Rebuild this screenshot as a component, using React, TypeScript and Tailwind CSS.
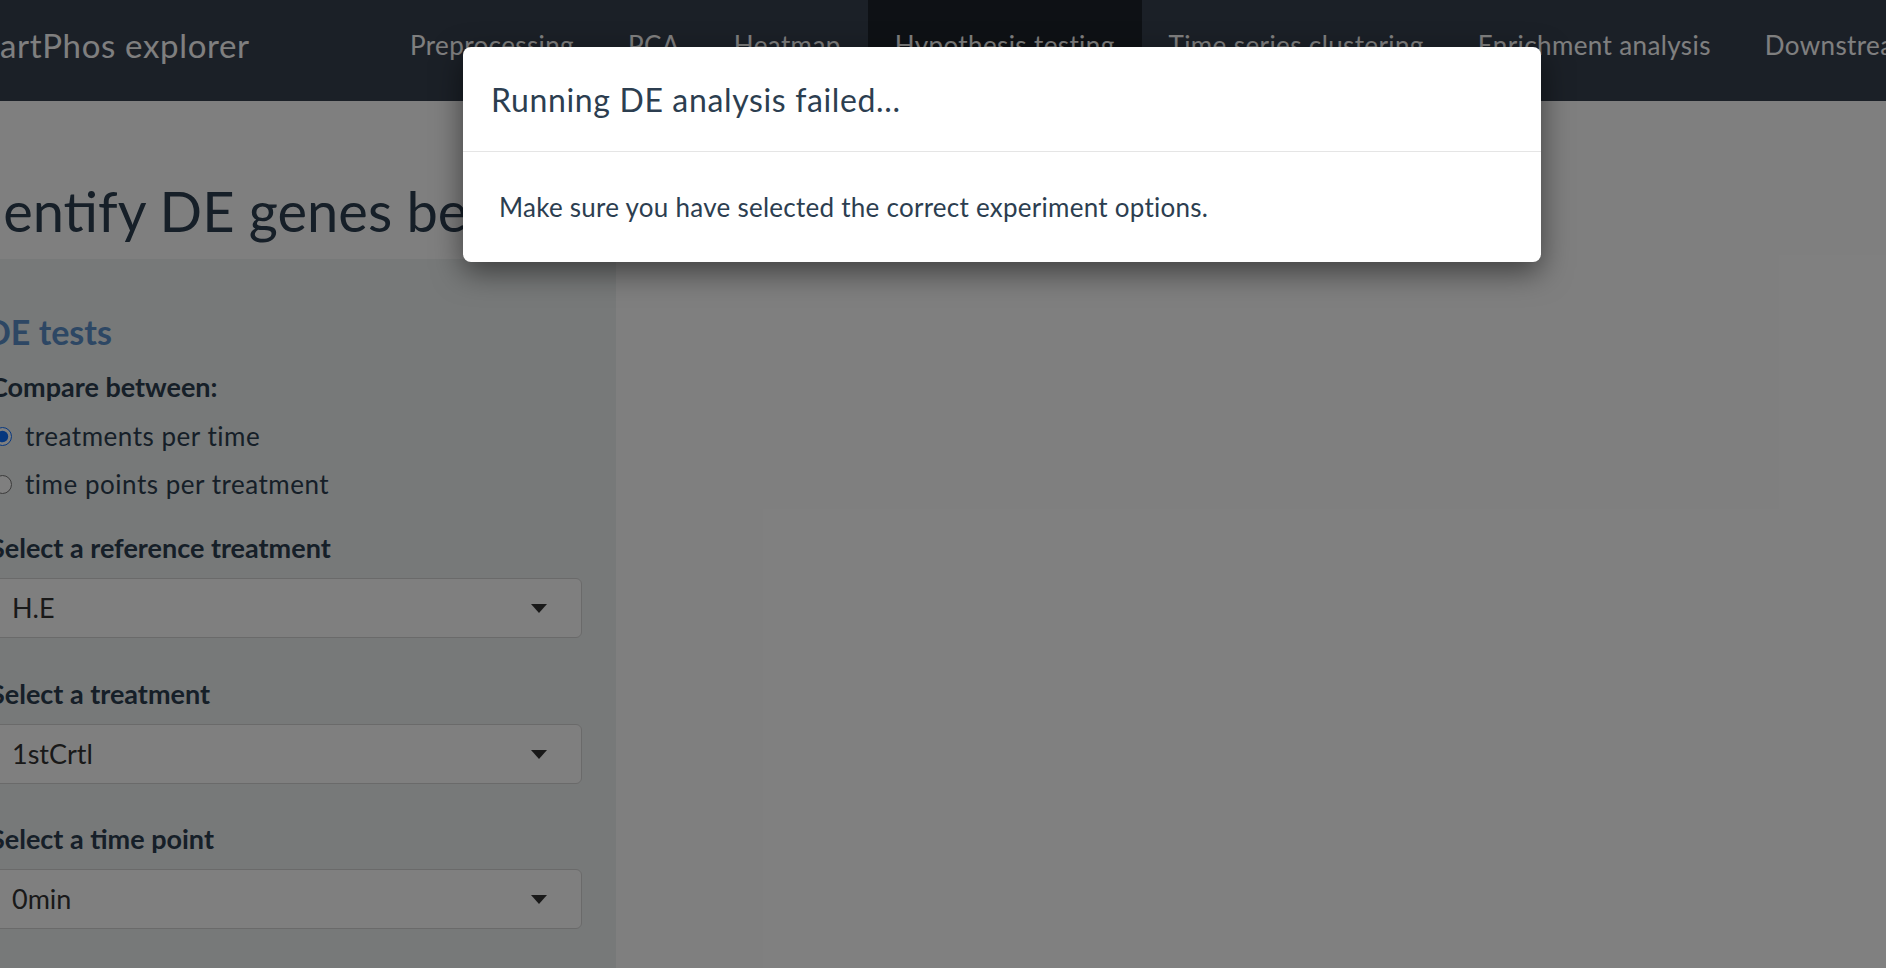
import React from 'react';

const navItems = [
  'Preprocessing',
  'PCA',
  'Heatmap',
  'Hypothesis testing',
  'Time series clustering',
  'Enrichment analysis',
  'Downstream analysis',
];

const SelectBox: React.FC<{ value: string }> = ({ value }) => (
  <div className="flex h-[60px] items-center justify-between rounded-[6px] border border-[#d4d4d4] bg-white pl-[21px] pr-[34px] text-[27px] text-[#333]">
    <span>{value}</span>
    <span className="h-0 w-0 border-x-[8px] border-t-[9px] border-x-transparent border-t-[#333]"></span>
  </div>
);

const App: React.FC = () => {
  return (
    <div className="relative h-[968px] w-full overflow-hidden bg-white font-['Lato','Noto_Sans',sans-serif] text-[#2c3e50]">
      {/* navbar */}
      <nav className="flex h-[101px] items-stretch bg-[#36404f] text-white">
        <div className="-ml-[46px] flex w-[429px] shrink-0 items-center pb-[10px] text-[33px] tracking-[0.02em]">
          SmartPhos explorer
        </div>
        <ul className="flex items-stretch whitespace-nowrap text-[26px] tracking-[0.015em]">
          {navItems.map((item) => (
            <li
              key={item}
              className={`flex items-center px-[27px] pb-[10px] ${item === 'Hypothesis testing' ? 'bg-[#1d222b]' : ''}`}
            >
              {item}
            </li>
          ))}
        </ul>
      </nav>

      {/* page title */}
      <div className="h-[158px] pt-[82px]">
        <h2 className="-ml-[43px] text-[56px] leading-none whitespace-nowrap">
          Identify DE genes between conditions
        </h2>
      </div>

      <div className="flex h-[709px]">
        <aside className="w-[616px] shrink-0 bg-[#eef2f2] pt-[54px] pr-[34px]">
          <div className="-ml-[20px]">
            <h4 className="ml-[5px] text-[34px] font-bold leading-[38px] text-[#5b8fc9]">DE tests</h4>

            <div className="mt-[20px] ml-[10px] text-[27px] font-bold leading-[32px]">Compare between:</div>
            <div className="mt-[9px] ml-[13px] text-[26px] tracking-[0.02em]">
              <label className="flex h-[48px] items-center gap-[13px]">
                <input type="radio" name="cmp" defaultChecked className="h-[19px] w-[19px] accent-[#0d6efd]" />
                <span>treatments per time</span>
              </label>
              <label className="flex h-[48px] items-center gap-[13px]">
                <input type="radio" name="cmp" className="h-[19px] w-[19px]" />
                <span>time points per treatment</span>
              </label>
            </div>

            <div className="ml-[10px]">
              <div className="mt-[24px] text-[27px] font-bold leading-[32px]">Select a reference treatment</div>
              <div className="mt-[14px]">
                <SelectBox value="H.E" />
              </div>

              <div className="mt-[40px] text-[27px] font-bold leading-[32px]">Select a treatment</div>
              <div className="mt-[14px]">
                <SelectBox value="1stCrtl" />
              </div>

              <div className="mt-[39px] text-[27px] font-bold leading-[32px]">Select a time point</div>
              <div className="mt-[14px]">
                <SelectBox value="0min" />
              </div>
            </div>
          </div>
        </aside>
        <div className="flex-1"></div>
      </div>

      {/* modal backdrop */}
      <div className="absolute inset-0 bg-black/50"></div>

      {/* modal */}
      <div className="absolute left-[463px] top-[47px] w-[1078px] rounded-[8px] bg-white shadow-[0_10px_30px_rgba(0,0,0,0.5)]">
        <div className="flex h-[105px] items-center border-b border-[#e5e5e5] px-[28px]">
          <h4 className="pt-[2px] text-[32px] tracking-[0.02em] text-[#2c3e50]">Running DE analysis failed...</h4>
        </div>
        <div className="flex h-[110px] items-center px-[36px]">
          <p className="text-[26px] tracking-[0.01em] text-[#2c3e50]">
            Make sure you have selected the correct experiment options.
          </p>
        </div>
      </div>
    </div>
  );
};

export default App;
